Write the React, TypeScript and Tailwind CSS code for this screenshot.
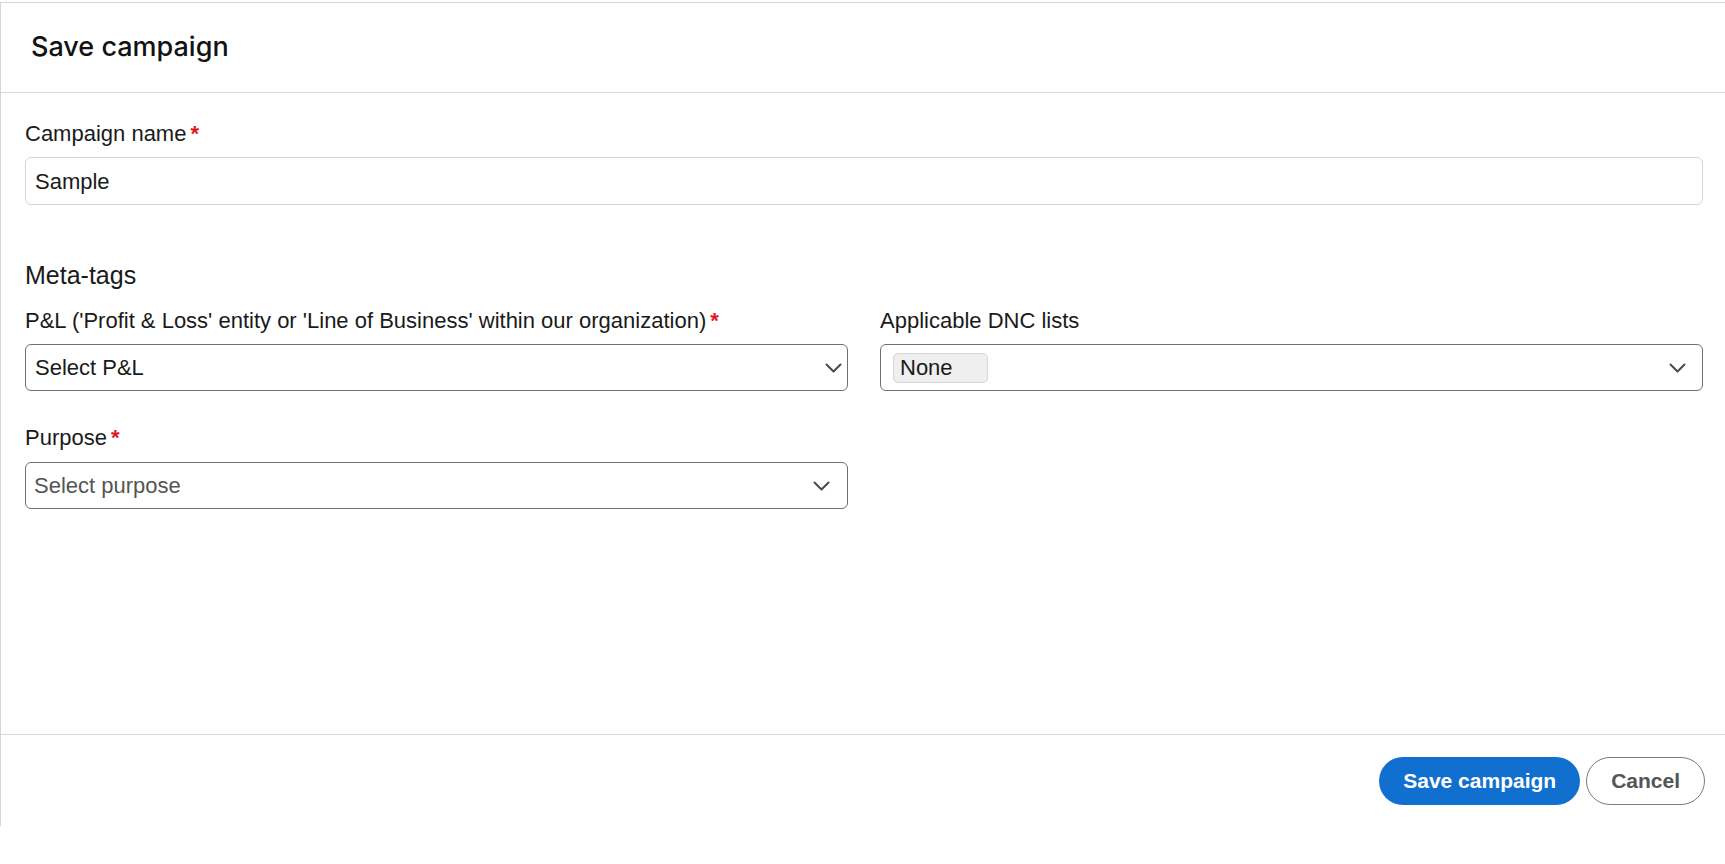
import React from "react";

const Chevron = ({ className = "" }: { className?: string }) => (
  <svg
    className={className}
    width="17"
    height="10"
    viewBox="0 0 17 10"
    fill="none"
    stroke="#4a4a4a"
    strokeWidth="2"
    strokeLinecap="round"
    strokeLinejoin="round"
  >
    <path d="M1.5 1.5 L8.5 8.5 L15.5 1.5" />
  </svg>
);

const Req = () => <span className="ml-[4px] text-[#e0171e] font-bold">*</span>;

export default function App() {
  return (
    <div
      className="w-full h-[864px] bg-white text-[#1a1a1a]"
      style={{ fontFamily: '"Liberation Sans", Arial, sans-serif' }}
    >
      <div className="mt-[2px] h-[824px] border-t border-l border-[#d6d6d6] flex flex-col">
        <div className="h-[90px] border-b border-[#d9d9d9] px-[30px] flex items-center">
          <h1
            className="text-[27px] font-medium text-[#121212]"
            style={{ fontFamily: "Inter, sans-serif" }}
          >
            Save campaign
          </h1>
        </div>

        <div className="flex-1 pl-[24px] pr-[22px] pt-[28px]">
          <div className="text-[22px] leading-[25px] flex">
            <span>Campaign name</span>
            <Req />
          </div>
          <div className="mt-[11px] h-[48px] border border-[#d4d4d4] rounded-[6px] flex items-center px-[9px] text-[22px]">
            Sample
          </div>

          <div className="mt-[56px] text-[25px] leading-[29px]">Meta-tags</div>

          <div className="mt-[18px] grid grid-cols-2 gap-x-[32px]">
            <div>
              <div className="text-[22px] leading-[25px] flex">
                <span>P&amp;L ('Profit &amp; Loss' entity or 'Line of Business' within our organization)</span>
                <Req />
              </div>
              <div className="mt-[11px] h-[47px] border border-[#707070] rounded-[6px] flex items-center justify-between pl-[9px] pr-[5px] text-[22px]">
                <span>Select P&amp;L</span>
                <Chevron />
              </div>
            </div>
            <div>
              <div className="text-[22px] leading-[25px]">Applicable DNC lists</div>
              <div className="mt-[11px] h-[47px] border border-[#707070] rounded-[6px] flex items-center justify-between pl-[12px] pr-[16px] text-[22px]">
                <span className="h-[30px] w-[95px] flex items-center px-[6px] bg-[#efefef] border border-[#d6d6d6] rounded-[5px]">
                  None
                </span>
                <Chevron />
              </div>
            </div>
          </div>

          <div className="mt-[34px] grid grid-cols-2 gap-x-[32px]">
            <div>
              <div className="text-[22px] leading-[25px] flex">
                <span>Purpose</span>
                <Req />
              </div>
              <div className="mt-[12px] h-[47px] border border-[#707070] rounded-[6px] flex items-center justify-between pl-[8px] pr-[17px] text-[22px] text-[#555555]">
                <span>Select purpose</span>
                <Chevron />
              </div>
            </div>
            <div />
          </div>
        </div>

        <div className="h-[92px] border-t border-[#d9d9d9] flex items-start justify-end pt-[22px] pr-[20px] gap-[6px]">
          <button className="h-[48px] px-[24px] rounded-full bg-[#1170cf] text-white text-[21px] font-bold">
            Save campaign
          </button>
          <button className="h-[48px] px-[24px] rounded-full border border-[#7a7a7a] bg-white text-[#555555] text-[21px] font-bold">
            Cancel
          </button>
        </div>
      </div>
    </div>
  );
}
